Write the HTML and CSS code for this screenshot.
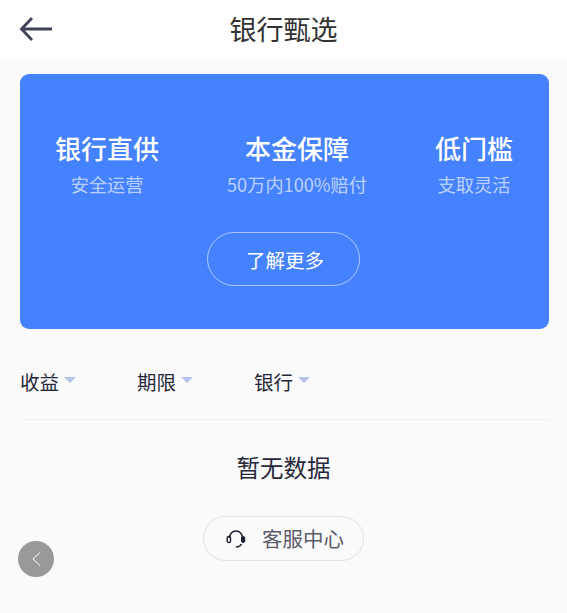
FILE: index.html
```
<!DOCTYPE html>
<html lang="zh">
<head>
<meta charset="utf-8">
<title>银行甄选</title>
<link rel="stylesheet" href="styles.css">
</head>
<body>
<header class="nav">
  <svg class="back" width="34" height="26" viewBox="0 0 34 26"><path d="M33 13H3M13 2 2.500 13 13 24" fill="none" stroke="#3f4258" stroke-width="2.800"/></svg>
  <h1>银行甄选</h1>
</header>
<section class="banner">
  <div class="feats">
    <div class="feat"><b>银行直供</b><span>安全运营</span></div>
    <div class="feat"><b>本金保障</b><span>50万内100%赔付</span></div>
    <div class="feat"><b>低门槛</b><span>支取灵活</span></div>
  </div>
  <a class="more">了解更多</a>
</section>
<div class="filters">
  <div class="filter">收益<i></i></div>
  <div class="filter">期限<i></i></div>
  <div class="filter">银行<i></i></div>
</div>
<p class="empty">暂无数据</p>
<div class="service-wrap">
  <a class="service">
    <svg width="20" height="20" viewBox="0 0 20 20"><path d="M3.500 9C4 4.500 6.500 2 10 2s6 2.500 6.500 7M15.500 15c-1 2-3 3-5.500 3" fill="none" stroke="#1c1f30" stroke-width="1.500"/><rect x="1.200" y="7.500" width="3.300" height="6" rx="1.600" fill="none" stroke="#1c1f30" stroke-width="1.400"/><rect x="15.500" y="7.500" width="3.300" height="6" rx="1.600" fill="#1c1f30" stroke="#1c1f30" stroke-width="1"/></svg>
    <span class="service-label">客服中心</span>
  </a>
</div>
<button class="float-back" aria-label="返回"><svg width="12" height="16" viewBox="0 0 12 16"><path d="M10 1.500 3 8l7 6.500" fill="none" stroke="#fff" stroke-width="1"/></svg></button>
</body>
</html>
```
FILE: styles.css
```
* { box-sizing: border-box; }
html, body { margin: 0; height: 100%; }
body {
  background: #fafafb;
  font-family: "Noto Sans CJK SC", "Liberation Sans", sans-serif;
  color: #2b2d3c;
  overflow: hidden;
  position: relative;
}
.nav {
  height: 59px;
  background: #fff;
  display: flex;
  align-items: center;
  justify-content: center;
  position: relative;
  padding-bottom: 2px;
}
.nav h1 { margin: 0; font-size: 27px; font-weight: 400; line-height: 1; color: #333; }
.back { position: absolute; left: 19px; top: 16px; }
.banner {
  margin: 15px 18px 0 20px;
  height: 255px;
  background: #4582ff;
  border-radius: 9px;
  display: flex;
  flex-direction: column;
  align-items: center;
  padding-top: 59px;
}
.feats {
  width: 100%;
  display: flex;
  justify-content: space-between;
  padding: 0 36px 0 35px;
}
.feat { display: flex; flex-direction: column; align-items: center; color: #fff; }
.feat b { font-size: 26px; font-weight: 500; line-height: 30px; white-space: nowrap; }
.feat span { font-size: 18.200px; line-height: 20px; margin-top: 11px; color: rgba(255,255,255,.65); white-space: nowrap; }
.more {
  margin: 38px 2px 0 0;
  width: 153px;
  height: 54px;
  padding-left: 3px;
  border: 1px solid rgba(255,255,255,.55);
  border-radius: 27px;
  color: #fff;
  font-size: 19.500px;
  display: flex;
  align-items: center;
  justify-content: center;
}
.filters {
  margin: 0 18px 0 20px;
  height: 91px;
  display: flex;
  align-items: center;
  gap: 61px;
  padding-top: 15px;
  border-bottom: 1px solid #f0f0f3;
}
.filter { display: flex; align-items: center; font-size: 19.500px; color: #262838; }
.filter i {
  margin-left: 5px;
  border-left: 6px solid transparent;
  border-right: 6px solid transparent;
  border-top: 6px solid #b7c3ea;
  margin-top: -3px;
}
.empty { margin: 31px 0 0; text-align: center; font-size: 23.500px; line-height: 32px; color: #26283a; }
.service-wrap { display: flex; justify-content: center; margin-top: 33px; }
.service {
  width: 161px;
  height: 45px;
  border: 1px solid #e2e3ea;
  border-radius: 23px;
  display: flex;
  align-items: center;
  justify-content: center;
  gap: 16px;
  padding-left: 3px;
  font-size: 20.500px;
  color: #5a5c6a;
}
.service-label { margin-top: -2px; }
.float-back {
  position: absolute;
  left: 18px;
  top: 541px;
  width: 36px;
  height: 36px;
  border: 0;
  padding: 0;
  border-radius: 50%;
  background: #999;
  display: flex;
  align-items: center;
  justify-content: center;
}
```
